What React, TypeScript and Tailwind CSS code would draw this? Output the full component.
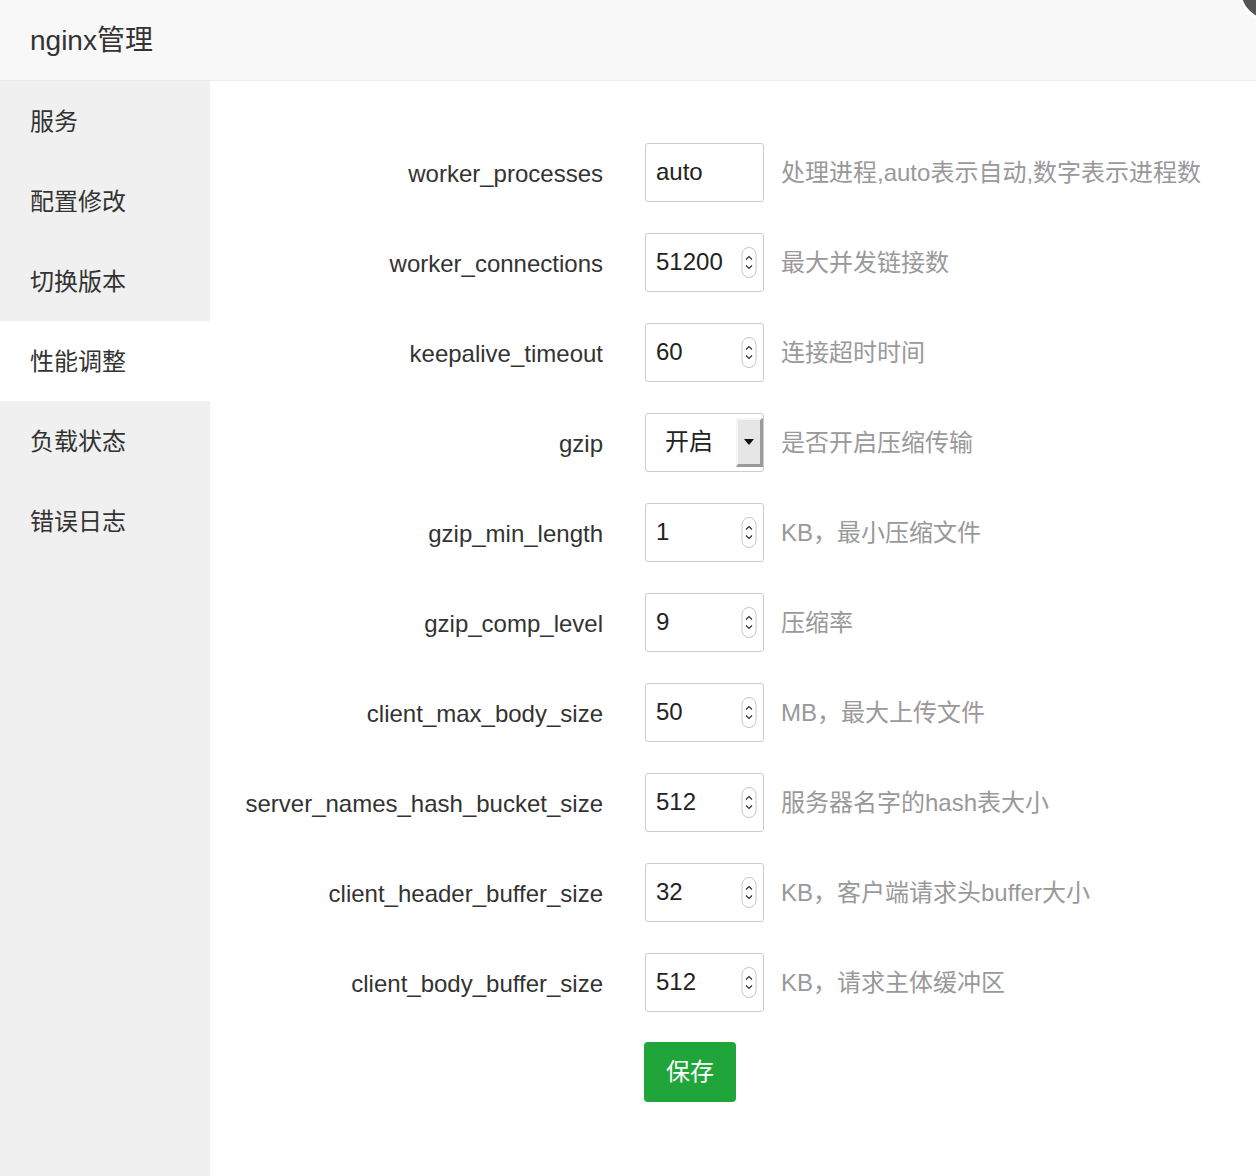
import React from "react";

const FONT = { fontFamily: '"Liberation Sans", "Noto Sans CJK SC", sans-serif' };

type Row = { label: string; value: string; kind: "text" | "number" | "select"; desc: string };

const rows: Row[] = [
  { label: "worker_processes", value: "auto", kind: "text", desc: "处理进程,auto表示自动,数字表示进程数" },
  { label: "worker_connections", value: "51200", kind: "number", desc: "最大并发链接数" },
  { label: "keepalive_timeout", value: "60", kind: "number", desc: "连接超时时间" },
  { label: "gzip", value: "开启", kind: "select", desc: "是否开启压缩传输" },
  { label: "gzip_min_length", value: "1", kind: "number", desc: "KB，最小压缩文件" },
  { label: "gzip_comp_level", value: "9", kind: "number", desc: "压缩率" },
  { label: "client_max_body_size", value: "50", kind: "number", desc: "MB，最大上传文件" },
  { label: "server_names_hash_bucket_size", value: "512", kind: "number", desc: "服务器名字的hash表大小" },
  { label: "client_header_buffer_size", value: "32", kind: "number", desc: "KB，客户端请求头buffer大小" },
  { label: "client_body_buffer_size", value: "512", kind: "number", desc: "KB，请求主体缓冲区" },
];

const menu = ["服务", "配置修改", "切换版本", "性能调整", "负载状态", "错误日志"];

function Spinner() {
  return (
    <svg width="16" height="31" viewBox="0 0 16 31" className="shrink-0">
      <rect x="1" y="0.5" width="14" height="30" rx="7" fill="#fff" stroke="#c4c4c4" />
      <polyline points="5,12.5 8,9.5 11,12.5" fill="none" stroke="#333" strokeWidth="1.2" />
      <polyline points="5,18.5 8,21.5 11,18.5" fill="none" stroke="#333" strokeWidth="1.2" />
    </svg>
  );
}

function Field({ row }: { row: Row }) {
  if (row.kind === "select") {
    return (
      <div className="flex h-[59px] w-[119px] items-stretch rounded-[3px] border border-[#cccccc] bg-white">
        <div className="flex flex-1 items-center pl-[19px] text-[24px] text-[#222]">{row.value}</div>
        <div className="my-[4px] flex w-[27px] items-center justify-center border-t-2 border-l-2 border-b-[3px] border-r-[3px] border-t-[#f4f4f4] border-l-[#f4f4f4] border-b-[#9a9a9a] border-r-[#9a9a9a] bg-[#e6e6e6]">
          <svg width="10" height="6" viewBox="0 0 10 6">
            <polygon points="0,0 10,0 5,6" fill="#111" />
          </svg>
        </div>
      </div>
    );
  }
  return (
    <div className="flex h-[59px] w-[119px] items-center justify-between rounded-[3px] border border-[#cccccc] bg-white pl-[10px] pr-[6px]">
      <span className="text-[24px] text-[#222]">{row.value}</span>
      {row.kind === "number" && <Spinner />}
    </div>
  );
}

export default function App() {
  return (
    <div className="relative min-h-[1176px] w-[1256px] overflow-hidden bg-white" style={FONT}>
      <div className="absolute right-[-46px] top-[-42px] h-[64px] w-[64px] rounded-full border-[3px] border-white bg-[#555555]" />
      <header className="flex h-[81px] items-center border-b border-[#ececec] bg-[#f8f8f8] pl-[30px] pt-[2px]">
        <span className="text-[28px] text-[#333]">nginx管理</span>
      </header>
      <div className="flex min-h-[1095px]">
        <aside className="w-[210px] shrink-0 bg-[#f0f0f0]">
          {menu.map((m, i) => (
            <div
              key={m}
              className={
                i === 3
                  ? "flex h-[80px] items-center bg-white pl-[30px] pt-[2px] text-[24px] text-[#333]"
                  : "flex h-[80px] items-center pl-[30px] pt-[2px] text-[24px] text-[#333]"
              }
            >
              {m}
            </div>
          ))}
        </aside>
        <main className="flex-1 pt-[46px]">
          {rows.map((r) => (
            <div key={r.label} className="flex h-[90px] items-center">
              <div className="w-[393px] pt-[3px] text-right text-[24px] text-[#333]">{r.label}</div>
              <div className="ml-[42px]">
                <Field row={r} />
              </div>
              <div className="ml-[17px] pt-[1px] text-[24px] text-[#999]">{r.desc}</div>
            </div>
          ))}
          <div className="ml-[434px] mt-[15px]">
            <button className="flex h-[60px] w-[92px] items-center justify-center rounded-[4px] bg-[#20a53a] text-[24px] text-white">
              保存
            </button>
          </div>
        </main>
      </div>
    </div>
  );
}
